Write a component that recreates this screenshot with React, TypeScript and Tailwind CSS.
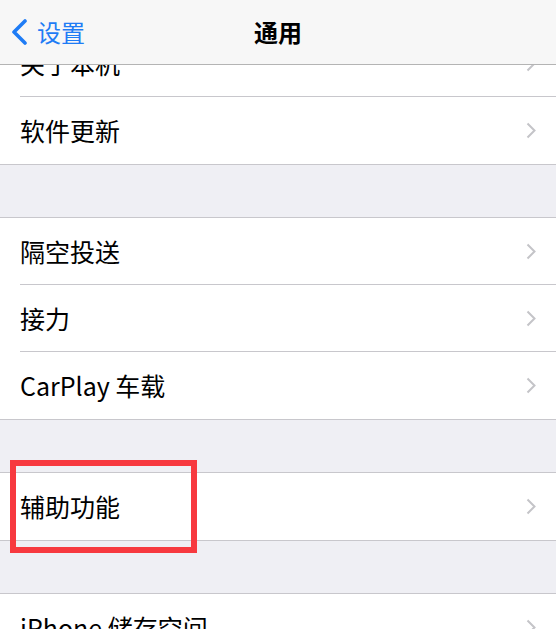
import React from 'react';

const FONT = { fontFamily: '"Noto Sans CJK SC", "Noto Sans", sans-serif' };

const groups: string[][] = [
  ['关于本机', '软件更新'],
  ['隔空投送', '接力', 'CarPlay 车载'],
  ['辅助功能'],
  ['iPhone 储存空间'],
];

function Chevron() {
  return (
    <svg width="10" height="17" viewBox="0 0 10 17" className="shrink-0">
      <path d="M1.5 1.5 L8.5 8.5 L1.5 15.5" fill="none" stroke="#c4c4c8" strokeWidth="2" />
    </svg>
  );
}

function Row({ label, last }: { label: string; last: boolean }) {
  return (
    <div className="pl-[20px]">
      <div
        className={`h-[67px] flex items-center justify-between pr-[20px] ${last ? '' : 'border-b border-[#c8c7cc]'}`}
      >
        <span className="text-[25px] leading-none text-black">{label}</span>
        <Chevron />
      </div>
    </div>
  );
}

export default function App() {
  return (
    <div className="relative w-[556px] h-[629px] overflow-hidden bg-[#efeff4] flex flex-col" style={FONT}>
      {/* Nav bar */}
      <div className="h-[65px] shrink-0 bg-[#f7f7f7] border-b border-[#b4b4b4] flex items-center relative z-10">
        <div className="flex items-center pl-[10px] gap-[9px] w-[160px]">
          <svg width="18" height="26" viewBox="0 0 18 26">
            <path d="M15 2 L4 13 L15 24" fill="none" stroke="#1f7cf5" strokeWidth="3.6" strokeLinecap="round" strokeLinejoin="round" />
          </svg>
          <span className="text-[24px] leading-none text-[#1f7cf5] -mt-[1px]">设置</span>
        </div>
        <div className="flex-1 flex justify-center -ml-[160px]">
          <span className="text-[24px] leading-none font-semibold text-black -mt-[1px]">通用</span>
        </div>
      </div>

      {/* List */}
      <div className="flex-1 overflow-hidden">
        <div className="-mt-[36px] flex flex-col gap-[52px]">
          {groups.map((g, gi) => (
            <div key={gi} className="bg-white border-y border-[#c8c7cc]">
              {g.map((label, i) => (
                <Row key={label} label={label} last={i === g.length - 1} />
              ))}
            </div>
          ))}
        </div>
      </div>

      {/* Red annotation box */}
      <div className="absolute left-[10px] top-[460px] w-[187px] h-[93px] border-[6px] border-[#f7393f]" />
    </div>
  );
}
